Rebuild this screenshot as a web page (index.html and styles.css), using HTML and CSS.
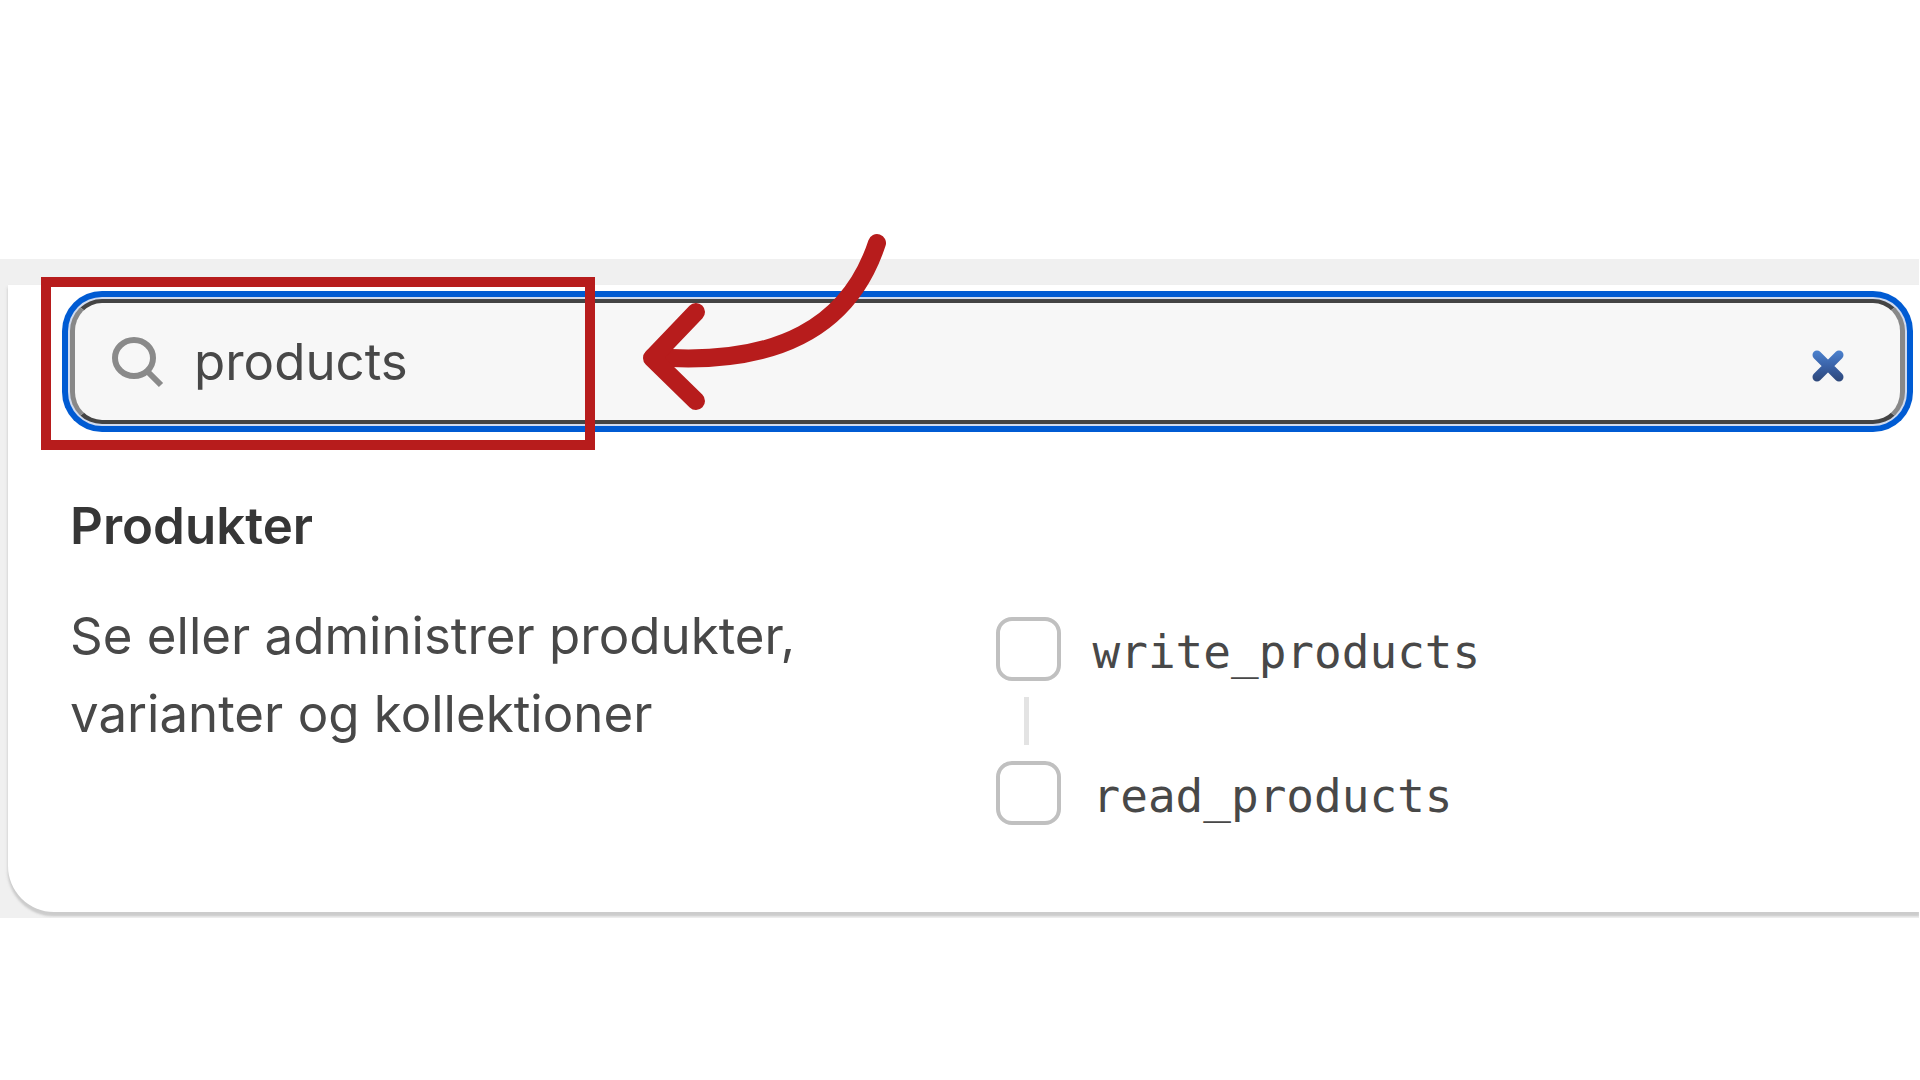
FILE: index.html
```
<!DOCTYPE html>
<html lang="da">
	<head>
		<meta charset="utf-8">
		<title>Produkter</title>
		<link rel="stylesheet" href="styles.css">
	</head>
	<body>
		<main class="panel">
			<section class="card">
				<form class="search" role="search">
					<svg class="searchIcon" viewBox="0 0 52 52" aria-hidden="true">
						<ellipse cx="22" cy="22" rx="19" ry="18" />
						<path d="M35 35L49 49" />
					</svg>
					<input class="searchInput" type="text" value="products" aria-label="products">
					<button class="clearBtn" type="reset" aria-label="x">
						<svg class="clearIcon" viewBox="0 0 32 32" aria-hidden="true">
							<defs>
								<linearGradient id="clearFill" gradientUnits="userSpaceOnUse" x1="0" y1="2" x2="0" y2="30">
									<stop offset="0" stop-color="#4a7fcb" />
									<stop offset="0.5" stop-color="#3a62a8" />
									<stop offset="1" stop-color="#2f4a7d" />
								</linearGradient>
							</defs>
							<path d="M5 5L27 27M27 5L5 27" />
						</svg>
					</button>
					<!-- red marker and arrow on top of the search field -->
					<div class="marker"></div>
					<svg class="arrow" viewBox="0 0 244 180" aria-hidden="true">
						<path d="M234 13C207 95 137 137 10 127" />
						<path d="M53 82L9 128L53 171" />
					</svg>
				</form>
				<h2 class="title">Produkter</h2>
				<div class="scopes">
					<p class="description">Se eller administrer produkter,<br>varianter og kollektioner</p>
					<div class="scopeList">
						<label class="scope">
							<input class="checkbox" type="checkbox">
							<span class="scopeName">write_products</span>
						</label>
						<div class="connector"></div>
						<label class="scope">
							<input class="checkbox" type="checkbox">
							<span class="scopeName">read_products</span>
						</label>
					</div>
				</div>
			</section>
		</main>
	</body>
</html>
```
FILE: styles.css
```
* {
	box-sizing: border-box;
}
body {
	margin: 0;
	background-color: #ffffff;
	color: #484848;
	font-family: Inter, "Liberation Sans", sans-serif;
	font-size: 51px;
	line-height: 78px;
}
.panel {
	margin: 259px 1px 0 0;
	padding: 26px 0 6px 8px;
	background-color: #f0f0f0;
	/* cut the card shadow at the bottom, leave room for the arrow at the top */
	clip-path: inset(-100px 0 0 0);
}
.card {
	padding: 14px 14px 87px 62px;
	background-color: #ffffff;
	border-bottom-left-radius: 46px;
	box-shadow: 0 4px 2px 0 #cccccc, 0 3px 3px 1px #dddddd;
}
.search {
	position: relative;
	display: flex;
	align-items: center;
	height: 125px;
	padding: 0 56px 0 37px;
	background-color: #f7f7f7;
	border: solid #444444;
	border-width: 4px 5px;
	border-color: #444444 #888888;
	border-radius: 32px;
	box-shadow: 0 0 0 2px #d0dbef, 0 0 0 8px #005bd3;
}
.searchIcon {
	flex: none;
	width: 52px;
	height: 52px;
	fill: none;
	stroke: #8a8a8a;
	stroke-width: 6px;
}
.searchInput {
	flex: 1;
	min-width: 0;
	height: 78px;
	margin-left: 30px;
	padding: 0;
	border: none;
	outline: none;
	background: none;
	color: inherit;
	font: inherit;
}
.clearBtn {
	flex: none;
	display: flex;
	padding: 8px 0 0;
	border: none;
	background: none;
	cursor: pointer;
}
.clearIcon {
	width: 32px;
	height: 32px;
	fill: none;
	stroke: url(#clearFill);
	stroke-width: 9px;
	stroke-linecap: round;
}
.marker {
	position: absolute;
	top: -26px;
	left: -34px;
	width: 554px;
	height: 173px;
	border: 10px solid #b71c1c;
	pointer-events: none;
}
.arrow {
	position: absolute;
	top: -73px;
	left: 568px;
	width: 244px;
	height: 180px;
	fill: none;
	stroke: #b71c1c;
	stroke-width: 18px;
	stroke-linecap: round;
	stroke-linejoin: round;
	pointer-events: none;
}
.title {
	margin: 63px 0 32px;
	color: #363636;
	font-size: 51px;
	font-weight: 600;
}
.scopes {
	display: grid;
	grid-template-columns: 1fr 1fr;
	gap: 16px;
}
.description {
	margin: 0;
}
.scopeList {
	padding-top: 20px;
}
.scope {
	display: flex;
	align-items: center;
	gap: 32px;
	height: 64px;
	font-family: "DejaVu Sans Mono", monospace;
	font-size: 46px;
	cursor: pointer;
}
.scopeName {
	padding-top: 6px;
}
.checkbox {
	flex: none;
	appearance: none;
	width: 65px;
	height: 64px;
	margin: 0;
	border: 4px solid #c0c0c0;
	border-radius: 16px;
	background-color: #ffffff;
}
.connector {
	width: 5px;
	height: 48px;
	margin: 16px 0 16px 28px;
	background-color: #e3e3e3;
}
```
